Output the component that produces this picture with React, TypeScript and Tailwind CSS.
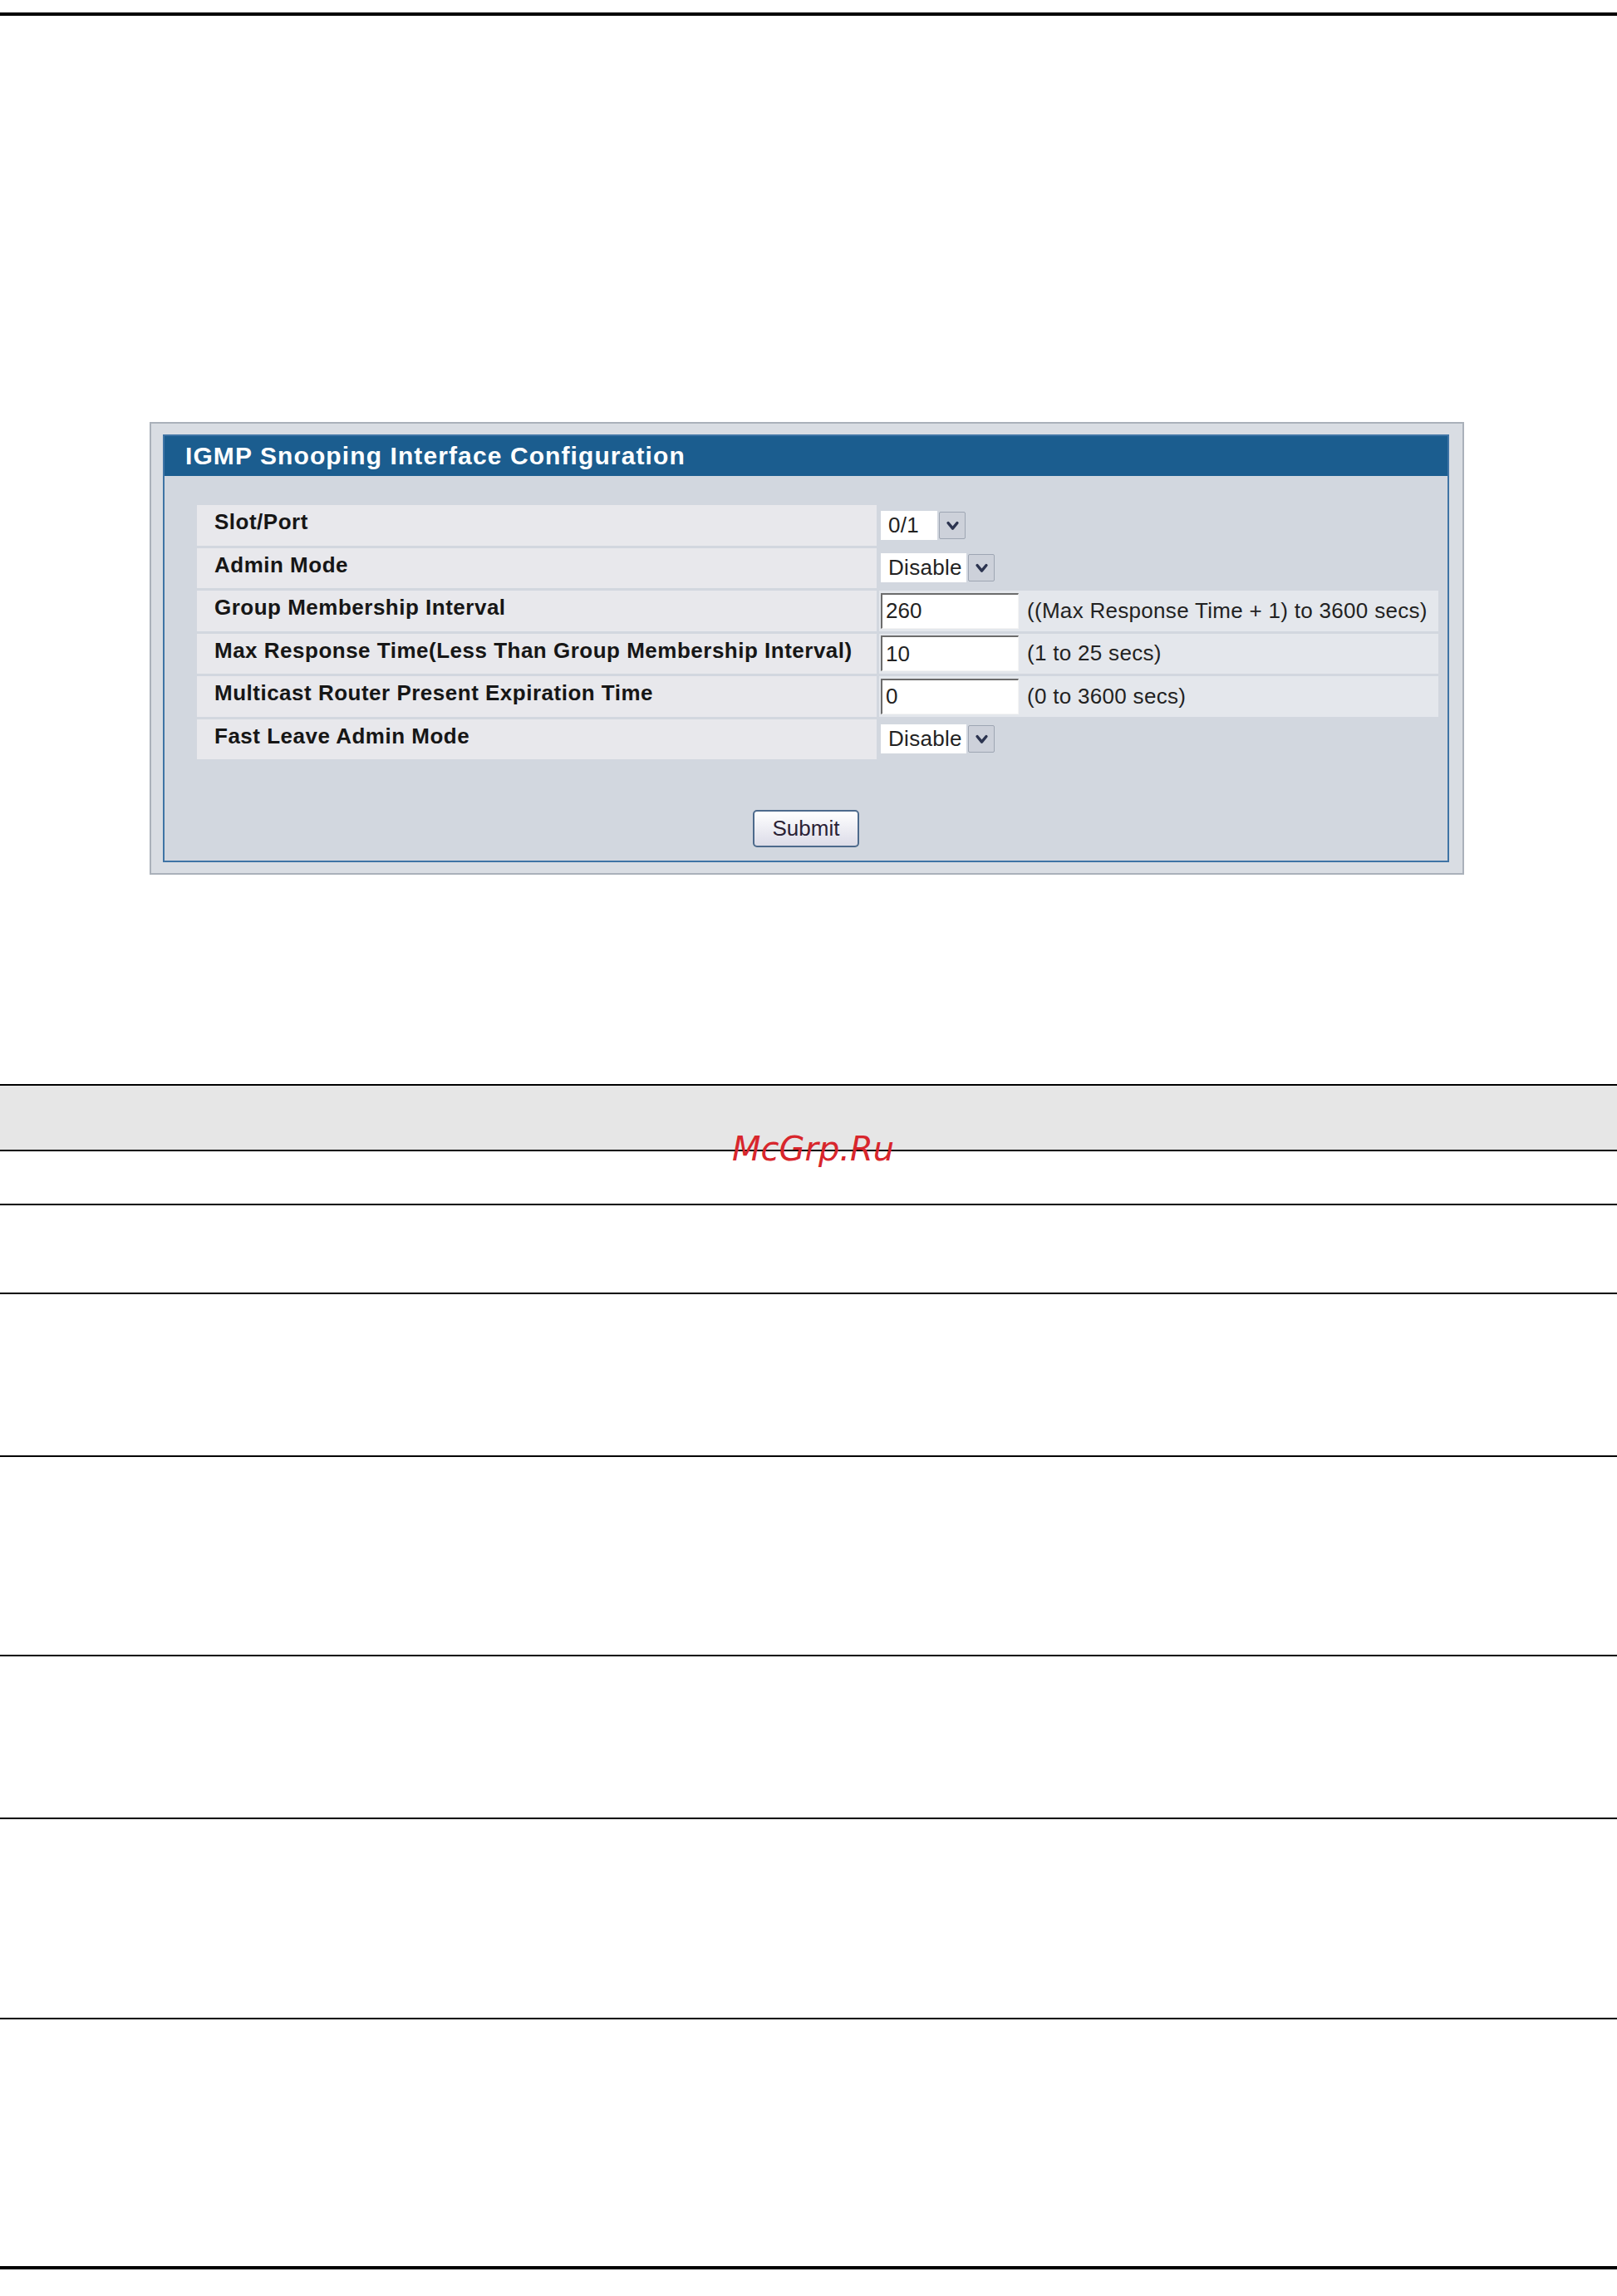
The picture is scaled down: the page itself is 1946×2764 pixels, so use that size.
import React from 'react';

const UI_FONT = 'font-["Liberation_Sans",Arial,sans-serif]';

function Chevron() {
  return (
    <svg viewBox="0 0 14 12" className="w-[17px] h-[15px]">
      <path d="M2.5 3.5 L7 9 L11.5 3.5" fill="none" stroke="#2c3450" strokeWidth="2.8" strokeLinecap="round" strokeLinejoin="round" />
    </svg>
  );
}

function Select({ value, width }: { value: string; width: string }) {
  return (
    <div className="flex items-center h-[35px] gap-[2px]">
      <div className={`${width} h-full bg-white flex items-center pl-[9px] text-[26px] text-[#222] tracking-[0.3px]`}>
        {value}
      </div>
      <div className="w-[32px] h-[33px] bg-[#cdd1da] border border-[#9ea6b3] rounded-[2px] flex items-center justify-center">
        <Chevron />
      </div>
    </div>
  );
}

function TextInput({ value, hint }: { value: string; hint: string }) {
  return (
    <div className="flex items-center h-full gap-[10px]">
      <div className="w-[166px] h-[43px] bg-white border-t-2 border-l-2 border-[#6c6c6c] border-r border-b border-r-[#f4f4f4] border-b-[#f4f4f4] flex items-center pl-[4px] text-[26px] text-[#222]">
        {value}
      </div>
      <span className="text-[26px] text-[#222] tracking-[0.3px]">{hint}</span>
    </div>
  );
}

type Row = { label: string; kind: 'select' | 'input'; value: string; hint?: string; w?: string };

const rows: Row[] = [
  { label: 'Slot/Port', kind: 'select', value: '0/1', w: 'w-[68px]' },
  { label: 'Admin Mode', kind: 'select', value: 'Disable', w: 'w-[103px]' },
  { label: 'Group Membership Interval', kind: 'input', value: '260', hint: '((Max Response Time + 1) to 3600 secs)' },
  { label: 'Max Response Time(Less Than Group Membership Interval)', kind: 'input', value: '10', hint: '(1 to 25 secs)' },
  { label: 'Multicast Router Present Expiration Time', kind: 'input', value: '0', hint: '(0 to 3600 secs)' },
  { label: 'Fast Leave Admin Mode', kind: 'select', value: 'Disable', w: 'w-[103px]' },
];

export default function App() {
  return (
    <div className={`relative w-[1946px] min-h-[2764px] bg-white ${UI_FONT}`}>
      {/* Top rule */}
      <div className="pt-[15px]">
        <div className="h-[4px] bg-black" />
      </div>

      {/* Config panel */}
      <div className="mt-[489px] ml-[180px] w-[1582px] bg-[#d9dde3] border-2 border-[#aab1ba] pl-[14px] pr-[16px] pt-[13px] pb-[13px]">
        <div className="border-2 border-[#3f74a5] bg-[#d2d7df]">
          <div className="h-[48px] bg-[#1b5d8f] flex items-center pl-[25px] text-white font-bold text-[30px] tracking-[1.1px] leading-none">
            IGMP Snooping Interface Configuration
          </div>
          <div className="pt-[35px] pl-[39px] pr-[11px]">
            <div className="grid grid-cols-[818px_673px] auto-rows-[48.5px] gap-[3px]">
              {rows.map((r) => (
                <React.Fragment key={r.label}>
                  <div className="bg-[#e8e8ec] pl-[21px] pt-[5px] text-[26px] leading-[30px] font-bold text-[#161616] tracking-[0.5px] whitespace-nowrap">
                    {r.label}
                  </div>
                  <div className={`${r.kind === 'input' ? 'bg-[#e4e7ec]' : ''} pl-[2px] flex items-center`}>
                    {r.kind === 'select' ? (
                      <Select value={r.value} width={r.w ?? 'w-[68px]'} />
                    ) : (
                      <TextInput value={r.value} hint={r.hint ?? ''} />
                    )}
                  </div>
                </React.Fragment>
              ))}
            </div>
          </div>
          <div className="mt-[61px] pb-[16px] flex justify-center">
            <button className="w-[128px] h-[45px] rounded-[5px] border-2 border-[#4d6a8c] bg-gradient-to-b from-white to-[#dcdce8] text-[26px] text-[#2b2235] flex items-center justify-center">
              Submit
            </button>
          </div>
        </div>
      </div>

      {/* Document table rules */}
      <div className="mt-[252px]">
        <div className="h-[81px] bg-[#e6e6e6] border-t-2 border-b-2 border-black" />
        <div className="h-[65px] border-b-2 border-black" />
        <div className="h-[107px] border-b-2 border-black" />
        <div className="h-[196px] border-b-2 border-black" />
        <div className="h-[240px] border-b-2 border-black" />
        <div className="h-[196px] border-b-2 border-black" />
        <div className="h-[241px] border-b-2 border-black" />
        <div className="h-[297px]" />
        <div className="h-[4px] bg-black" />
      </div>

      {/* Watermark */}
      <div className='absolute left-[881px] top-[1363px] text-[40px] leading-none italic text-[#d8262c] font-["DejaVu_Sans",sans-serif]'>
        McGrp.Ru
      </div>
    </div>
  );
}
